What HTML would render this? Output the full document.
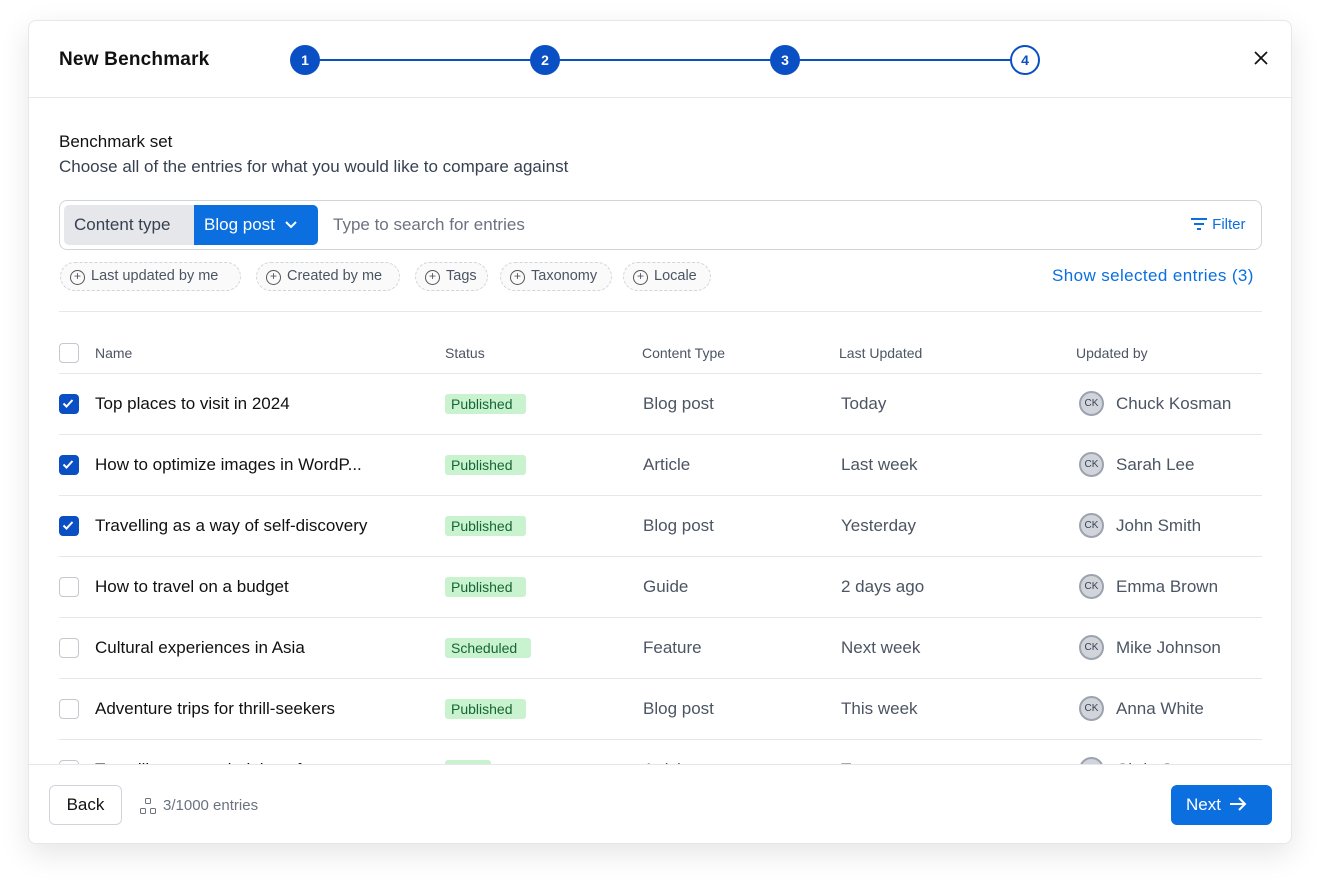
<!DOCTYPE html>
<html><head><style>
*{box-sizing:border-box;margin:0;padding:0}
body{width:1320px;height:889px;background:#fff;font-family:"Liberation Sans",sans-serif;position:relative;overflow:hidden;color:#111}
.modal{position:absolute;left:28px;top:20px;width:1264px;height:824px;background:#fff;border:1px solid #e5e7eb;border-radius:8px;box-shadow:0 10px 30px rgba(0,0,0,.10);overflow:hidden}
.hdr{position:absolute;left:0;top:0;width:100%;height:77px;border-bottom:1px solid #e5e7eb}
.title{position:absolute;left:30px;top:28px;font-size:19px;font-weight:bold;color:#111;letter-spacing:.2px}
.step{position:absolute;top:24px;width:30px;height:30px;border-radius:50%;background:#0a4fc4;color:#fff;font-size:14px;font-weight:bold;text-align:center;line-height:30px}
.line{position:absolute;top:38px;height:2px;background:#0a4fc4}
.close{position:absolute;left:1224px;top:29px}
.abs{position:absolute}
.search{position:absolute;left:30px;top:179px;width:1203px;height:50px;border:1px solid #d1d5db;border-radius:8px}
.ct{position:absolute;left:4px;top:4px;height:40px;width:130px;background:#e5e7eb;border-radius:5px 0 0 5px;font-size:17px;color:#374151;line-height:40px;padding-left:10px}
.bp{position:absolute;left:134px;top:4px;height:40px;width:124px;background:#0b6fe0;color:#fff;border-radius:0 5px 5px 0;font-size:17px;line-height:40px;padding-left:10px}
.chip{position:absolute;top:241px;height:29px;border:1px dashed #d1d5db;border-radius:15px;font-size:14.5px;color:#4b5563;line-height:27px;padding-left:30px;background:#fafafa}
.chip:before{content:"+";position:absolute;left:9px;top:7px;width:13px;height:13px;border:1px solid #555;border-radius:50%;font-size:12px;line-height:11px;text-align:center}
.hr{position:absolute;left:30px;width:1203px;height:1px;background:#e5e7eb}
.th{position:absolute;top:324px;font-size:14px;color:#4b5563}
.cb{position:absolute;left:30px;width:20px;height:20px;border:1.5px solid #c4c8cf;border-radius:4px;background:#fff}
.cb.on{background:#0a4fc4;border-color:#0a4fc4}
.cell{position:absolute;font-size:17px;color:#4b5563}
.name{color:#111}
.badge{position:absolute;height:20px;padding:0 6px;width:81px;background:#c9f2cf;color:#166534;border-radius:3px;font-size:14px;line-height:20px}
.av{position:absolute;left:1050px;width:25px;height:25px;border-radius:50%;background:#d1d5db;border:2px solid #9ca3af;font-size:10px;color:#374151;text-align:center;line-height:21px}
.ftr{position:absolute;left:0;top:743px;width:100%;height:81px;background:#fff;border-top:1px solid #e5e7eb}
</style></head><body>
<div class="modal">
<div class="hdr">
<div class="title">New Benchmark</div>
<div class="line" style="left:290px;width:226px"></div>
<div class="line" style="left:530px;width:226px"></div>
<div class="line" style="left:770px;width:226px"></div>
<div class="step" style="left:261px">1</div>
<div class="step" style="left:501px">2</div>
<div class="step" style="left:741px">3</div>
<div class="step" style="left:981px;background:#fff;color:#0a4fc4;border:2px solid #0a4fc4;line-height:26px">4</div>
<svg class="close" width="16" height="16" viewBox="0 0 16 16"><path d="M2 2L14 14M14 2L2 14" stroke="#111" stroke-width="1.7"/></svg>
</div>
<div class="abs" style="left:30px;top:111px;font-size:17px;color:#111">Benchmark set</div>
<div class="abs" style="left:30px;top:136px;font-size:17px;color:#374151">Choose all of the entries for what you would like to compare against</div>
<div class="search">
<div class="ct">Content type</div>
<div class="bp">Blog post <svg width="14" height="10" viewBox="0 0 14 10" style="margin-left:4px"><path d="M2 2l5 5 5-5" stroke="#fff" stroke-width="2" fill="none"/></svg></div>
<div class="abs" style="left:273px;top:14px;font-size:17px;color:#6b7280">Type to search for entries</div>
<div class="abs" style="left:1130px;top:15px;font-size:15px;color:#0b6fe0"><svg width="18" height="14" viewBox="0 0 18 14" style="vertical-align:-2px"><path d="M1 2h16M4 7h10M7 12h4" stroke="#0b6fe0" stroke-width="2"/></svg> Filter</div>
</div>
<div class="chip" style="left:31px;width:181px">Last updated by me</div>
<div class="chip" style="left:227px;width:144px">Created by me</div>
<div class="chip" style="left:386px;width:73px">Tags</div>
<div class="chip" style="left:471px;width:112px">Taxonomy</div>
<div class="chip" style="left:594px;width:88px">Locale</div>
<div class="abs" style="left:1023px;top:245px;font-size:17px;color:#0b6fe0;letter-spacing:.4px">Show selected entries (3)</div>
<div class="hr" style="top:290px"></div>
<div class="cb" style="top:322px"></div>
<div class="th" style="left:66px">Name</div>
<div class="th" style="left:416px">Status</div>
<div class="th" style="left:613px">Content Type</div>
<div class="th" style="left:810px">Last Updated</div>
<div class="th" style="left:1047px">Updated by</div>

<div class="hr" style="top:352px"></div>
<div class="cb on" style="top:373px"><svg width="17" height="17" viewBox="0 0 17 17"><path d="M3.5 8.5l3 3 6-6.5" stroke="#fff" stroke-width="2" fill="none"/></svg></div>
<div class="cell name" style="left:66px;top:373px">Top places to visit in 2024</div>
<div class="badge" style="left:416px;top:373px">Published</div>
<div class="cell" style="left:614px;top:373px">Blog post</div>
<div class="cell" style="left:812px;top:373px">Today</div>
<div class="av" style="top:370px">CK</div><div class="cell" style="left:1087px;top:373px">Chuck Kosman</div>

<div class="hr" style="top:413px"></div>
<div class="cb on" style="top:434px"><svg width="17" height="17" viewBox="0 0 17 17"><path d="M3.5 8.5l3 3 6-6.5" stroke="#fff" stroke-width="2" fill="none"/></svg></div>
<div class="cell name" style="left:66px;top:434px">How to optimize images in WordP...</div>
<div class="badge" style="left:416px;top:434px">Published</div>
<div class="cell" style="left:614px;top:434px">Article</div>
<div class="cell" style="left:812px;top:434px">Last week</div>
<div class="av" style="top:431px">CK</div><div class="cell" style="left:1087px;top:434px">Sarah Lee</div>

<div class="hr" style="top:474px"></div>
<div class="cb on" style="top:495px"><svg width="17" height="17" viewBox="0 0 17 17"><path d="M3.5 8.5l3 3 6-6.5" stroke="#fff" stroke-width="2" fill="none"/></svg></div>
<div class="cell name" style="left:66px;top:495px">Travelling as a way of self-discovery</div>
<div class="badge" style="left:416px;top:495px">Published</div>
<div class="cell" style="left:614px;top:495px">Blog post</div>
<div class="cell" style="left:812px;top:495px">Yesterday</div>
<div class="av" style="top:492px">CK</div><div class="cell" style="left:1087px;top:495px">John Smith</div>

<div class="hr" style="top:535px"></div>
<div class="cb" style="top:556px"></div>
<div class="cell name" style="left:66px;top:556px">How to travel on a budget</div>
<div class="badge" style="left:416px;top:556px">Published</div>
<div class="cell" style="left:614px;top:556px">Guide</div>
<div class="cell" style="left:812px;top:556px">2 days ago</div>
<div class="av" style="top:553px">CK</div><div class="cell" style="left:1087px;top:556px">Emma Brown</div>

<div class="hr" style="top:596px"></div>
<div class="cb" style="top:617px"></div>
<div class="cell name" style="left:66px;top:617px">Cultural experiences in Asia</div>
<div class="badge" style="left:416px;top:617px;width:86px">Scheduled</div>
<div class="cell" style="left:614px;top:617px">Feature</div>
<div class="cell" style="left:812px;top:617px">Next week</div>
<div class="av" style="top:614px">CK</div><div class="cell" style="left:1087px;top:617px">Mike Johnson</div>

<div class="hr" style="top:657px"></div>
<div class="cb" style="top:678px"></div>
<div class="cell name" style="left:66px;top:678px">Adventure trips for thrill-seekers</div>
<div class="badge" style="left:416px;top:678px">Published</div>
<div class="cell" style="left:614px;top:678px">Blog post</div>
<div class="cell" style="left:812px;top:678px">This week</div>
<div class="av" style="top:675px">CK</div><div class="cell" style="left:1087px;top:678px">Anna White</div>

<div class="hr" style="top:718px"></div>
<div class="cb" style="top:739px"></div>
<div class="cell name" style="left:66px;top:739px">Travelling to new heights of</div>
<div class="badge" style="left:416px;top:739px;width:46px">Draft</div>
<div class="cell" style="left:614px;top:739px">Article</div>
<div class="cell" style="left:812px;top:739px">Tomorrow</div>
<div class="av" style="top:736px">CK</div><div class="cell" style="left:1087px;top:739px">Chris Green</div>

<div class="ftr">
<div class="abs" style="left:20px;top:20px;width:73px;height:40px;border:1px solid #d1d5db;border-radius:6px;font-size:17px;line-height:38px;text-align:center;color:#111">Back</div>
<svg class="abs" style="left:110px;top:32px" width="18" height="18" viewBox="0 0 18 18"><rect x="6.5" y="1.5" width="5" height="5" rx="1" stroke="#6b7280" fill="none"/><rect x="1.5" y="11.5" width="5" height="5" rx="1" stroke="#6b7280" fill="none"/><rect x="11.5" y="11.5" width="5" height="5" rx="1" stroke="#6b7280" fill="none"/></svg>
<div class="abs" style="left:134px;top:32px;font-size:15px;color:#6b7280">3/1000 entries</div>
<div class="abs" style="left:1142px;top:20px;width:101px;height:40px;background:#0b6fe0;border-radius:6px;color:#fff;font-size:17px;line-height:40px;padding-left:15px">Next <svg width="20" height="16" viewBox="0 0 20 16" style="vertical-align:-2px;margin-left:2px"><path d="M2 8h15M11 2l6 6-6 6" stroke="#fff" stroke-width="2" fill="none"/></svg></div>
</div>
</div>
</body></html>
